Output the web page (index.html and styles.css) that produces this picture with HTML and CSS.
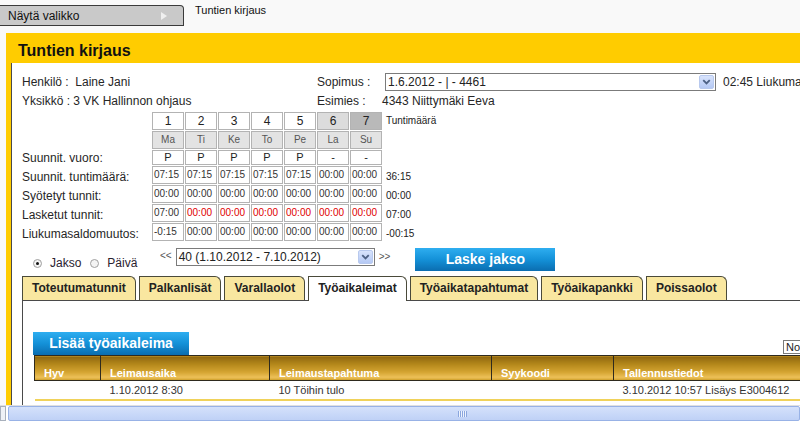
FILE: index.html
```html
<!DOCTYPE html>
<html lang="fi">
<head>
<meta charset="utf-8">
<title>Tuntien kirjaus</title>
<link rel="stylesheet" href="styles.css">
</head>
<body>
<div class="page">
  <div class="topbar">
    <div class="menu-btn"><span>Näytä valikko</span><span class="tri"></span></div>
    <div class="crumb">Tuntien kirjaus</div>
  </div>

  <div class="panel">
    <div class="panel-head">Tuntien kirjaus</div>
    <div class="panel-body">
      <div class="inner">
        <div class="info">
          <div>Henkilö :&nbsp; Laine Jani</div>
          <div>Sopimus :</div>
          <div class="select sel-wide"><span class="sel-text">1.6.2012 - | - 4461</span><span class="sel-arrow"><svg width="14" height="14" viewBox="0 0 14 14"><path d="M3.5 5 L7 8.5 L10.5 5" fill="none" stroke="#4d6185" stroke-width="2"/></svg></span></div>
          <div class="liuk">02:45 Liukumasaldo</div>
          <div>Yksikkö : 3 VK Hallinnon ohjaus</div>
          <div>Esimies :</div>
          <div>4343 Niittymäki Eeva</div>
          <div></div>
        </div>

        <div class="sched">
          <div></div>
          <div class="c num">1</div><div class="c num">2</div><div class="c num">3</div><div class="c num">4</div><div class="c num">5</div><div class="c num wk6">6</div><div class="c num wk7">7</div>
          <div class="tothead">Tuntimäärä</div>

          <div></div>
          <div class="c day">Ma</div><div class="c day">Ti</div><div class="c day">Ke</div><div class="c day">To</div><div class="c day">Pe</div><div class="c day">La</div><div class="c day">Su</div>
          <div></div>

          <div class="lbl">Suunnit. vuoro:</div>
          <div class="c pv">P</div><div class="c pv">P</div><div class="c pv">P</div><div class="c pv">P</div><div class="c pv">P</div><div class="c pv">-</div><div class="c pv">-</div>
          <div></div>

          <div class="lbl">Suunnit. tuntimäärä:</div>
          <div class="c t">07:15</div><div class="c t">07:15</div><div class="c t">07:15</div><div class="c t">07:15</div><div class="c t">07:15</div><div class="c t">00:00</div><div class="c t">00:00</div>
          <div class="tot">36:15</div>

          <div class="lbl">Syötetyt tunnit:</div>
          <div class="c t">00:00</div><div class="c t">00:00</div><div class="c t">00:00</div><div class="c t">00:00</div><div class="c t">00:00</div><div class="c t">00:00</div><div class="c t">00:00</div>
          <div class="tot">00:00</div>

          <div class="lbl">Lasketut tunnit:</div>
          <div class="c t">07:00</div><div class="c t red">00:00</div><div class="c t red">00:00</div><div class="c t red">00:00</div><div class="c t red">00:00</div><div class="c t red">00:00</div><div class="c t red">00:00</div>
          <div class="tot">07:00</div>

          <div class="lbl">Liukumasaldomuutos:</div>
          <div class="c t">-0:15</div><div class="c t">00:00</div><div class="c t">00:00</div><div class="c t">00:00</div><div class="c t">00:00</div><div class="c t">00:00</div><div class="c t">00:00</div>
          <div class="tot">-00:15</div>
        </div>

        <div class="period">
          <div class="radios">
            <span class="radio checked"></span><span class="rlabel">Jakso</span>
            <span class="radio"></span><span class="rlabel">Päivä</span>
          </div>
          <span class="nav">&lt;&lt;</span>
          <div class="select sel-period"><span class="sel-text">40 (1.10.2012 - 7.10.2012)</span><span class="sel-arrow"><svg width="14" height="14" viewBox="0 0 14 14"><path d="M3.5 5 L7 8.5 L10.5 5" fill="none" stroke="#4d6185" stroke-width="2"/></svg></span></div>
          <span class="nav">&gt;&gt;</span>
          <div class="btn btn-laske">Laske jakso</div>
        </div>

        <div class="tabs">
          <div class="tab">Toteutumatunnit</div>
          <div class="tab">Palkanlisät</div>
          <div class="tab">Varallaolot</div>
          <div class="tab active">Työaikaleimat</div>
          <div class="tab">Työaikatapahtumat</div>
          <div class="tab">Työaikapankki</div>
          <div class="tab">Poissaolot</div>
        </div>

        <div class="tab-panel">
          <div class="tools">
            <div class="btn btn-add">Lisää työaikaleima</div>
            <div class="pager">Nollaa</div>
          </div>
          <table class="grid">
            <thead>
              <tr>
                <th class="w1">Hyv</th>
                <th class="w2">Leimausaika</th>
                <th class="w3">Leimaustapahtuma</th>
                <th class="w4">Syykoodi</th>
                <th class="w5">Tallennustiedot</th>
              </tr>
            </thead>
            <tbody>
              <tr>
                <td></td>
                <td>1.10.2012 8:30</td>
                <td>10 Töihin tulo</td>
                <td></td>
                <td>3.10.2012 10:57 Lisäys E3004612</td>
              </tr>
            </tbody>
          </table>
        </div>
      </div>
    </div>
  </div>

  <div class="hscroll">
    <div class="sb-left"></div>
    <div class="sb-thumb"><span class="grip"></span></div>
  </div>
</div>
</body>
</html>
```

FILE: styles.css
```css
html, body {
  margin: 0;
  padding: 0;
}

body {
  font-family: "Liberation Sans", Arial, sans-serif;
  background: #f9f9f9;
  color: #222;
}

.page {
  width: 800px;
  height: 421px;
  overflow: hidden;
  display: flex;
  flex-direction: column;
  white-space: nowrap;
}

/* top bar */
.topbar {
  flex: none;
  height: 33px;
  display: flex;
  align-items: flex-start;
}

.menu-btn {
  margin-top: 5px;
  width: 184px;
  height: 21px;
  box-sizing: border-box;
  background: #c9c9c9;
  border: 1px solid #3a3a3a;
  border-left: none;
  border-top-right-radius: 4px;
  display: flex;
  align-items: center;
  justify-content: space-between;
  padding: 0 16px 0 8px;
  font-size: 12px;
  color: #111;
}

.tri {
  width: 0;
  height: 0;
  border-left: 6px solid #efefef;
  border-top: 4px solid transparent;
  border-bottom: 4px solid transparent;
}

.crumb {
  margin: 4px 0 0 11px;
  font-size: 11px;
  line-height: 13px;
  color: #111;
}

/* panel */
.panel {
  flex: 1;
  min-height: 0;
  margin-left: 6px;
  display: flex;
  flex-direction: column;
}

.panel-head {
  flex: none;
  height: 30px;
  background: #ffcc00;
  padding-left: 12px;
  font-size: 16px;
  font-weight: bold;
  line-height: 35px;
  color: #111;
  overflow: hidden;
}

.panel-body {
  flex: 1;
  min-height: 0;
  display: flex;
  background: #fff;
  border-left: 5px solid #ffcc00;
}

.inner {
  flex: 1;
  min-width: 0;
  display: flex;
  flex-direction: column;
  border-left: 1px solid #4a4a4a;
  padding: 9px 0 0 10px;
}

/* info */
.info {
  display: grid;
  grid-template-columns: 295px 65px 341px auto;
  grid-auto-rows: 19px;
  align-items: center;
  font-size: 12px;
  color: #262626;
}

.select {
  box-sizing: border-box;
  height: 18px;
  border: 1px solid #7b7b7b;
  background: #fff;
  display: flex;
  align-items: center;
  justify-content: space-between;
  font-size: 12px;
  color: #222;
}

.sel-text {
  padding-left: 2px;
  overflow: hidden;
}

.sel-arrow {
  width: 15px;
  height: 14px;
  margin-right: 1px;
  box-sizing: border-box;
  border: 1px solid #b8c9ee;
  border-radius: 2px;
  background: linear-gradient(#d8e3fc, #b5c9f4);
  display: flex;
  align-items: center;
  justify-content: center;
}

.sel-wide {
  width: 331px;
  margin-left: 3px;
}

.liuk {
  overflow: visible;
}

/* schedule */
.sched {
  margin-top: 2px;
  display: grid;
  grid-template-columns: 129px repeat(7, 32px) auto;
  grid-template-rows: 18px 18px 15px 18px 18px 18px 18px;
  gap: 1px;
  color: #262626;
}

.c {
  box-sizing: border-box;
  border: 1px solid #b3b3b3;
  background: #fff;
}

.num {
  font-size: 12px;
  line-height: 16px;
  text-align: center;
  color: #222;
}

.wk6 {
  background: #dcdcdc;
}

.wk7 {
  background: #b9b9b9;
}

.day {
  background: #e3e3e3;
  font-size: 10px;
  line-height: 16px;
  text-align: center;
  color: #555;
}

.pv {
  font-size: 11px;
  line-height: 13px;
  text-align: center;
  color: #222;
}

.t {
  font-size: 10px;
  line-height: 16px;
  padding-left: 1px;
  color: #333;
  overflow: hidden;
}

.t.red {
  color: #e00000;
}

.lbl {
  align-self: end;
  font-size: 12px;
  line-height: 14px;
  color: #262626;
}

.tothead {
  font-size: 10px;
  line-height: 18px;
  padding-left: 3px;
  color: #222;
}

.tot {
  align-self: end;
  font-size: 10px;
  line-height: 12px;
  padding: 0 0 1px 3px;
  color: #222;
}

/* period row */
.period {
  margin-top: 6px;
  height: 24px;
  display: flex;
  align-items: flex-start;
  flex: none;
}

.radios {
  width: 130px;
  box-sizing: border-box;
  padding: 9px 0 0 11px;
  display: flex;
  align-items: center;
  font-size: 12px;
  color: #2a2230;
}

.radio {
  width: 9px;
  height: 9px;
  box-sizing: border-box;
  border-radius: 50%;
  border: 1px solid #a0a0a0;
  background: #f4f4f4;
  position: relative;
  margin-right: 8px;
}

.radio.checked::after {
  content: "";
  position: absolute;
  left: 2px;
  top: 2px;
  width: 3px;
  height: 3px;
  border-radius: 50%;
  background: #111;
}

.rlabel {
  margin-right: 9px;
}

.nav {
  font-size: 10px;
  line-height: 18px;
  color: #555;
  margin-left: 8px;
  margin-right: 4px;
}

.sel-period {
  margin-top: 1px;
  width: 199px;
}

.sel-period + .nav {
  margin-left: 4px;
  margin-top: 1px;
}

.btn {
  box-sizing: border-box;
  height: 23px;
  background: linear-gradient(#2eaef0, #1491d8 50%, #0b6db0);
  color: #fff;
  font-size: 14px;
  font-weight: bold;
  line-height: 23px;
  text-align: center;
}

.btn-laske {
  margin-left: 21px;
  margin-top: 1px;
  width: 140px;
}

/* tabs */
.tabs {
  margin-top: 5px;
  display: flex;
  gap: 3px;
  border-bottom: 1px solid #4a4a4a;
  flex: none;
  align-items: flex-start;
}

.tab {
  box-sizing: border-box;
  height: 24px;
  padding: 0 9px;
  border: 1px solid #4a4a3a;
  border-bottom: none;
  border-top-right-radius: 6px;
  background: #f9e7a0;
  font-size: 12px;
  font-weight: bold;
  line-height: 23px;
  color: #222;
}

.tab.active {
  background: #fff;
  height: 25px;
  margin-bottom: -1px;
}

.tab-panel {
  flex: 1;
  min-height: 0;
  border-left: 1px solid #4a4a4a;
  padding: 31px 0 0 10px;
}

.tools {
  display: flex;
  align-items: flex-end;
}

.btn-add {
  width: 156px;
}

.pager {
  margin-left: auto;
  margin-bottom: 1px;
  width: 17px;
  height: 14px;
  box-sizing: border-box;
  border: 1px solid #7a7a7a;
  border-right: none;
  font-size: 11px;
  line-height: 12px;
  padding-left: 2px;
  overflow: hidden;
  color: #222;
  background: #fff;
}

/* data table */
.grid {
  margin-left: 1px;
  width: 800px;
  border-collapse: collapse;
  table-layout: fixed;
}

.grid th {
  height: 25px;
  box-sizing: border-box;
  border: 1px solid #2e2a1e;
  background: linear-gradient(#8e6610 0%, #b18519 30%, #d4a431 65%, #eec25a 88%, #c8961f 100%);
  color: #fff;
  font-size: 11px;
  font-weight: bold;
  text-align: left;
  vertical-align: bottom;
  padding: 0 0 1px 9px;
}

.grid .w1 { width: 66px; }
.grid .w2 { width: 169px; }
.grid .w3 { width: 222px; }
.grid .w4 { width: 122px; }
.grid .w5 { width: 221px; }

.grid td {
  height: 19px;
  box-sizing: border-box;
  border-bottom: 2px solid #f0d25a;
  font-size: 11px;
  color: #333;
  padding: 0 0 0 9px;
}

/* horizontal scrollbar */
.hscroll {
  flex: none;
  height: 16px;
  display: flex;
  background: #fff;
  border-top: 1px solid #e0e0e0;
  box-sizing: border-box;
}

.sb-left {
  width: 6px;
  box-sizing: border-box;
  border: 1px solid #a8b0bc;
  background: #eef1f6;
}

.sb-thumb {
  flex: 1;
  margin-left: 2px;
  box-sizing: border-box;
  border: 1px solid #98b2e6;
  border-radius: 2px;
  background: linear-gradient(#d4e1fb, #bfd1f6);
  display: flex;
  align-items: center;
}

.grip {
  margin-left: 449px;
  width: 9px;
  height: 6px;
  background: repeating-linear-gradient(90deg, #8aa6de 0 1px, #eef3fd 1px 2px);
}
```
